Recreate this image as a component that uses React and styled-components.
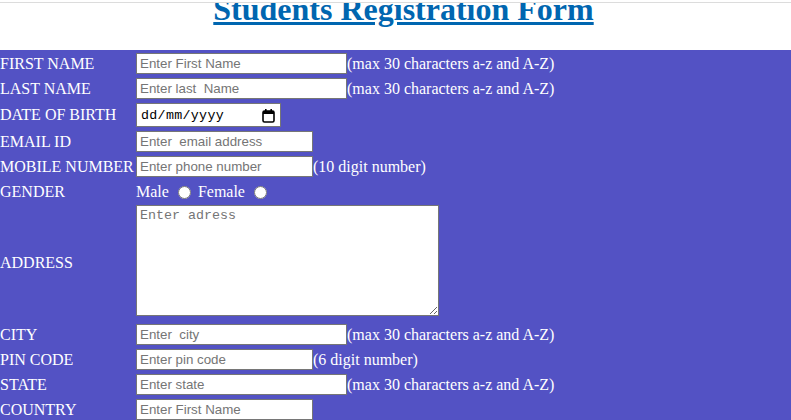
import React from 'react';
import styled, { createGlobalStyle } from 'styled-components';

const GlobalStyle = createGlobalStyle`
  html, body {
    margin: 0;
    padding: 0;
    background: #ffffff;
  }
  body {
    font-family: "Liberation Serif", "Times New Roman", serif;
    font-size: 16px;
  }
`;

const Page = styled.div`
  width: 791px;
  height: 420px;
  overflow: hidden;
`;

const Header = styled.header`
  margin-top: 2px;
  height: 47px;
  border-top: 1px solid #dcdcdc;
  overflow: hidden;
  padding-left: 16px;
`;

const Title = styled.h1`
  margin: -12.5px 0 0 0;
  text-align: center;
  font-family: "Liberation Serif", "Times New Roman", serif;
  font-size: 32px;
  font-weight: bold;
  line-height: normal;
  color: #0066b0;
  text-decoration: underline;
`;

const FormArea = styled.form`
  background: #5352c4;
  padding-top: 3px;
  padding-bottom: 20px;
  display: grid;
  grid-template-columns: 136px 1fr;
  row-gap: 4px;
  align-items: center;
`;

const Label = styled.div`
  color: #ffffff;
  font-size: 16px;
  white-space: nowrap;
  padding-top: ${(p) => p.$pad || 0}px;
`;

const Field = styled.div`
  display: flex;
  align-items: center;
  color: #ffffff;
  font-size: 16px;
  white-space: nowrap;
  padding-top: ${(p) => p.$pad || 0}px;
`;

const TextInput = styled.input`
  box-sizing: border-box;
  width: ${(p) => p.$w}px;
  height: 21px;
  margin: 0;
  padding: 1px 3px;
  border: 1px solid #767676;
  background: #ffffff;
  font-family: "Liberation Sans", Arial, sans-serif;
  font-size: 13.33px;
  color: #000;
  &::placeholder {
    color: #757575;
  }
`;

const DateBox = styled.label`
  box-sizing: border-box;
  width: 145px;
  height: 24px;
  display: flex;
  align-items: center;
  justify-content: space-between;
  padding: 0 5px 0 4px;
  border: 1px solid #767676;
  background: #ffffff;
`;

const DateText = styled.input`
  width: 100px;
  border: none;
  outline: none;
  padding: 0;
  margin: 0;
  font-family: "Liberation Mono", "DejaVu Sans Mono", monospace;
  font-size: 13.33px;
  letter-spacing: 0.3px;
  color: #000;
  &::placeholder {
    color: #000;
  }
`;

const Address = styled.textarea`
  box-sizing: border-box;
  width: 303px;
  height: 111px;
  margin: 0 0 4px 0;
  padding: 2px 3px;
  border: 1px solid #767676;
  font-family: "Liberation Mono", "DejaVu Sans Mono", monospace;
  font-size: 13.33px;
  &::placeholder {
    color: #757575;
  }
`;

const Radio = styled.input`
  width: 13px;
  height: 13px;
  margin: 1px 7px 0 9px;
`;

const Hint = styled.span`
  color: #ffffff;
`;

const CalendarIcon = () => (
  <svg width="13" height="15" viewBox="0 0 13 15" aria-hidden="true">
    <rect x="1" y="3" width="11" height="11" rx="1.5" fill="none" stroke="#000" strokeWidth="1.6" />
    <rect x="1" y="3" width="11" height="3" fill="#000" />
    <rect x="3" y="1" width="1.6" height="3" fill="#000" />
    <rect x="8.4" y="1" width="1.6" height="3" fill="#000" />
  </svg>
);

const textRows = [
  { label: 'FIRST NAME', ph: 'Enter First Name', w: 211, hint: '(max 30 characters a-z and A-Z)' },
  { label: 'LAST NAME', ph: 'Enter last  Name', w: 211, hint: '(max 30 characters a-z and A-Z)' },
];

const lowerRows = [
  { label: 'CITY', ph: 'Enter  city', w: 211, hint: '(max 30 characters a-z and A-Z)' },
  { label: 'PIN CODE', ph: 'Enter pin code', w: 177, hint: '(6 digit number)' },
  { label: 'STATE', ph: 'Enter state', w: 211, hint: '(max 30 characters a-z and A-Z)' },
  { label: 'COUNTRY', ph: 'Enter First Name', w: 177 },
];

const Row = ({ label, ph, w, hint }) => (
  <>
    <Label>{label}</Label>
    <Field>
      <TextInput type="text" placeholder={ph} $w={w} />
      {hint && <Hint>{hint}</Hint>}
    </Field>
  </>
);

export default function App() {
  return (
    <Page>
      <GlobalStyle />
      <Header>
        <Title>Students Registration Form</Title>
      </Header>
      <FormArea onSubmit={(e) => e.preventDefault()}>
        {textRows.map((r) => (
          <Row key={r.label} {...r} />
        ))}
        <Label>DATE OF BIRTH</Label>
        <Field>
          <DateBox>
            <DateText type="text" placeholder="dd/mm/yyyy" />
            <CalendarIcon />
          </DateBox>
        </Field>
        <Row label="EMAIL ID" ph="Enter  email address" w={177} />
        <Row label="MOBILE NUMBER" ph="Enter phone number" w={177} hint="(10 digit number)" />
        <Label $pad={2}>GENDER</Label>
        <Field $pad={2}>
          Male<Radio type="radio" name="gender" />Female<Radio type="radio" name="gender" />
        </Field>
        <Label>ADDRESS</Label>
        <Field>
          <Address placeholder="Enter adress" />
        </Field>
        {lowerRows.map((r) => (
          <Row key={r.label} {...r} />
        ))}
      </FormArea>
    </Page>
  );
}
